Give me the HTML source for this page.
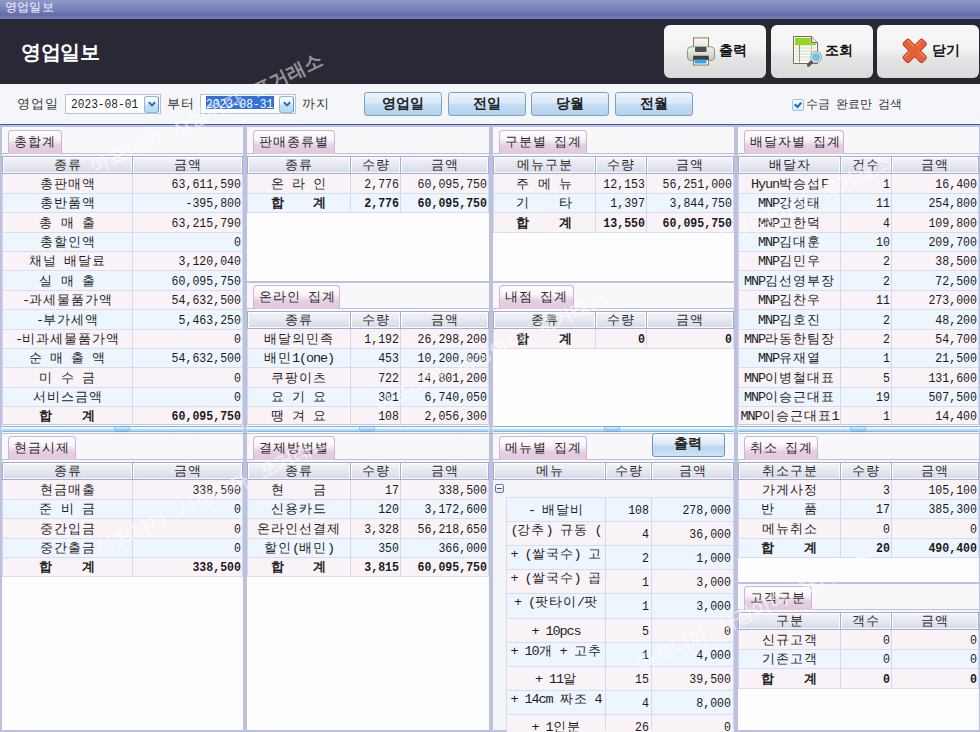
<!DOCTYPE html><html><head><meta charset="utf-8"><style>
*{margin:0;padding:0;box-sizing:border-box}
html,body{width:980px;height:732px;overflow:hidden;background:#f5f6f9;font-family:"Liberation Sans",sans-serif;color:#222}
div{white-space:pre}
.k{position:absolute;font-size:13px;letter-spacing:1px;text-align:center;overflow:hidden;color:#1e1e1e}
.n{position:absolute;font-family:"Liberation Mono",monospace;font-size:13px;text-align:right;transform:scaleX(0.89);transform-origin:100% 50%;padding-top:1px;color:#1a1a1a}
.b{font-weight:bold}
.tab{position:absolute;height:24px;border:1px solid #cfb3d0;border-bottom:none;border-radius:4px 4px 0 0;
 background:linear-gradient(#fffdff 0%,#faf5fa 35%,#f0e2ee 50%,#e6d0e4 62%,#e0c8dd 100%);font-size:13px;letter-spacing:1px;color:#2a2a2a;line-height:22px;padding-left:5px}
.hd{position:absolute;background:linear-gradient(#f4f5f9,#e3e5ee 60%,#d6d9e6);border-right:1px solid #a6add2;box-shadow:inset 1px 1px 0 #fff,inset -1px -1px 0 rgba(255,255,255,0.85);font-size:13px;letter-spacing:1px;color:#2a2a2a;text-align:center}
.btn{position:absolute;border:1px solid #7d9fc6;border-radius:3px;background:linear-gradient(#eef5fc,#d9e9f7 45%,#c2dbf1 55%,#b4d2ee);font-size:14px;font-weight:bold;text-align:center;color:#222}
</style></head><body>
<div style="position:absolute;left:0px;top:0px;width:980px;height:19px;background:linear-gradient(#9198c8 0px,#7b84bc 8px,#6770ab 14px,#646daa 16px,#6e79b5 17px,#6e79b5 19px)"></div>
<div style="position:absolute;left:5px;top:-1.6px;width:80px;height:18px;line-height:18px;color:#f4f4fb;font-size:11.5px;letter-spacing:0.2px">영업일보</div>
<div style="position:absolute;left:0px;top:19px;width:980px;height:65px;background:#2a2835"></div>
<div style="position:absolute;left:21px;top:37px;width:120px;height:30px;line-height:30px;color:#fff;font-size:20px;font-weight:bold;letter-spacing:-0.3px">영업일보</div>
<div style="position:absolute;left:664px;top:25px;width:102px;height:53px;border-radius:6px;background:linear-gradient(#f8f8f8 0%,#f3f3f3 45%,#e5e5e5 62%,#dadada 100%)"></div>
<div style="position:absolute;left:771px;top:25px;width:102px;height:53px;border-radius:6px;background:linear-gradient(#f8f8f8 0%,#f3f3f3 45%,#e5e5e5 62%,#dadada 100%)"></div>
<div style="position:absolute;left:877px;top:25px;width:102px;height:53px;border-radius:6px;background:linear-gradient(#f8f8f8 0%,#f3f3f3 45%,#e5e5e5 62%,#dadada 100%)"></div>
<div style="position:absolute;left:719px;top:38px;width:40px;height:26px;line-height:26px;font-size:13.5px;font-weight:bold;color:#111">출력</div>
<div style="position:absolute;left:825px;top:38px;width:40px;height:26px;line-height:26px;font-size:13.5px;font-weight:bold;color:#111">조회</div>
<div style="position:absolute;left:932px;top:38px;width:40px;height:26px;line-height:26px;font-size:13.5px;font-weight:bold;color:#111">닫기</div>
<svg style="position:absolute;left:686px;top:36px" width="30" height="32" viewBox="0 0 30 32">
<defs><linearGradient id="pb" x1="0" y1="0" x2="0" y2="1"><stop offset="0" stop-color="#f2f3ee"/><stop offset="1" stop-color="#c3c8bf"/></linearGradient>
<linearGradient id="pp" x1="0" y1="0" x2="0" y2="1"><stop offset="0" stop-color="#fafaf4"/><stop offset="1" stop-color="#e2e2d2"/></linearGradient></defs>
<rect x="7.5" y="1.9" width="15" height="11" fill="url(#pp)" stroke="#8b7b58"/>
<rect x="1.5" y="10.8" width="27" height="13.7" rx="3.5" fill="url(#pb)" stroke="#8f958f"/>
<rect x="9" y="11" width="11.5" height="5" rx="1" fill="#4d4d4d"/>
<rect x="7.5" y="20" width="15" height="9" fill="#fff" stroke="#8b7b58"/>
<rect x="7.5" y="20" width="15" height="4" fill="#3f3f3f"/>
<rect x="8.5" y="23.5" width="12" height="4" rx="1" fill="#35a2f2"/>
</svg>
<svg style="position:absolute;left:788px;top:32px" width="40" height="40" viewBox="0 0 40 40">
<path d="M5.5 4.5 H23.5 L29.5 10.5 V31.5 H5.5 Z" fill="#fbfbf5" stroke="#7b6b4b"/>
<path d="M7 6 H22.7 V11.3 H28 V13.2 H7 Z" fill="#8fd828"/>
<path d="M23.5 4.5 V10.5 H29.5" fill="#e9e9e0" stroke="#7b6b4b"/>
<g stroke="#d6d6ca" stroke-width="1"><path d="M7 16 H28 M7 19 H28 M7 22 H28 M7 25 H28 M7 28 H28"/></g>
<path d="M11.5 13 V30.5" stroke="#9a9a90" stroke-width="1"/>
<path d="M23.5 13 V30.5" stroke="#c0c0b4" stroke-width="1"/>
<path d="M24 29.5 L20.5 33" stroke="#555" stroke-width="3.2" stroke-linecap="round"/>
<circle cx="28.1" cy="25.1" r="5.4" fill="#eef1f1" stroke="#a4aaaa" stroke-width="1.2"/>
<circle cx="28.1" cy="25.1" r="3.4" fill="#62c8f6" stroke="#3aa0d8" stroke-width="0.6"/>
</svg>
<svg style="position:absolute;left:895px;top:32px" width="40" height="40" viewBox="0 0 40 40">
<defs><linearGradient id="xg" x1="0" y1="0" x2="1" y2="1"><stop offset="0" stop-color="#ee7a48"/><stop offset="1" stop-color="#e05a30"/></linearGradient></defs>
<g transform="translate(19.7 18.8) rotate(45)"><rect x="-13.6" y="-4" width="27.2" height="8" rx="2" fill="#e5613a" stroke="#c23a22" stroke-width="1"/></g>
<g transform="translate(19.7 18.8) rotate(-45)"><rect x="-13.6" y="-4" width="27.2" height="8" rx="2" fill="#e5613a" stroke="#c23a22" stroke-width="1"/></g>
<g transform="translate(19.7 18.8) rotate(45)"><rect x="-13.1" y="-3.5" width="26.2" height="7" rx="1.6" fill="#e5613a"/></g>
<g transform="translate(19.7 18.8) rotate(45)"><path d="M-12 -2.6 H-3.5 M3.5 -2.6 H12" stroke="#f39a66" stroke-width="1" opacity="0.8"/></g>
<g transform="translate(19.7 18.8) rotate(-45)"><path d="M-12 -2.6 H-4.2 M4.2 -2.6 H12" stroke="#f39a66" stroke-width="1" opacity="0.8"/></g>
</svg>
<div style="position:absolute;left:17px;top:93px;width:50px;height:22px;line-height:22px;font-size:13px;letter-spacing:1px;color:#333">영업일</div>
<div style="position:absolute;left:65px;top:94px;width:96px;height:20px;background:#fff;border:1px solid #b8bfd9"></div>
<div style="position:absolute;left:70.5px;top:94.8px;width:80px;height:20px;line-height:20px;font-family:Liberation Mono;font-size:13px;color:#1e1e1e;transform:scaleX(0.86);transform-origin:0 50%">2023-08-01</div>
<div style="position:absolute;left:144px;top:96px;width:15px;height:17px;border:1px solid #8fb6dc;border-right-color:#5a8fd0;border-radius:3px;background:linear-gradient(#fbfdff,#e6f3fc 45%,#c2e0f6 55%,#b5daf4)"></div>
<svg style="position:absolute;left:147px;top:100px" width="10" height="8"><path d="M1.8 2.2 L5 5.4 L8.2 2.2" stroke="#2f6cb4" stroke-width="2" fill="none"/></svg>
<div style="position:absolute;left:167px;top:93px;width:30px;height:22px;line-height:22px;font-size:13px;letter-spacing:1px;color:#333">부터</div>
<div style="position:absolute;left:200px;top:94px;width:96px;height:20px;background:#fff;border:1px solid #b8bfd9"></div>
<div style="position:absolute;left:206px;top:96px;width:68px;height:13px;background:#3570d8"></div>
<div style="position:absolute;left:205.5px;top:94.8px;width:80px;height:20px;line-height:20px;font-family:Liberation Mono;font-size:13px;color:#fff;transform:scaleX(0.86);transform-origin:0 50%">2023-08-31</div>
<div style="position:absolute;left:279px;top:96px;width:15px;height:17px;border:1px solid #8fb6dc;border-right-color:#5a8fd0;border-radius:3px;background:linear-gradient(#fbfdff,#e6f3fc 45%,#c2e0f6 55%,#b5daf4)"></div>
<svg style="position:absolute;left:282px;top:100px" width="10" height="8"><path d="M1.8 2.2 L5 5.4 L8.2 2.2" stroke="#2f6cb4" stroke-width="2" fill="none"/></svg>
<div style="position:absolute;left:302px;top:93px;width:30px;height:22px;line-height:22px;font-size:13px;letter-spacing:1px;color:#333">까지</div>
<div class="btn" style="left:364px;top:92px;width:78px;height:24px;line-height:20px">영업일</div>
<div class="btn" style="left:448px;top:92px;width:78px;height:24px;line-height:20px">전일</div>
<div class="btn" style="left:531px;top:92px;width:78px;height:24px;line-height:20px">당월</div>
<div class="btn" style="left:615px;top:92px;width:78px;height:24px;line-height:20px">전월</div>
<div style="position:absolute;left:792px;top:99px;width:12px;height:12px;border:1px solid #9cc2ea;border-radius:2px;background:linear-gradient(#f4faff,#dcefff)"></div>
<svg style="position:absolute;left:793px;top:100px" width="10" height="10"><path d="M1.6 4.2 L4.6 6.9 L8.2 2.6" stroke="#2d6cb8" stroke-width="2.2" fill="none"/></svg>
<div style="position:absolute;left:806px;top:92.5px;width:100px;height:22px;line-height:22px;font-size:12px;color:#333">수금<span style="font-family:Liberation Mono;font-size:11.57px;letter-spacing:-0.94px"> </span>완료만<span style="font-family:Liberation Mono;font-size:11.57px;letter-spacing:-0.94px"> </span>검색</div>
<div style="position:absolute;left:0px;top:124px;width:980px;height:1px;background:#4753b3"></div>
<div style="position:absolute;left:0px;top:125px;width:980px;height:607px;background:#bcc2de"></div>
<div style="position:absolute;left:2px;top:127px;width:241px;height:29px;background:#f8f8fa"></div>
<div style="position:absolute;left:2px;top:156px;width:241px;height:277px;background:#fdfdfe"></div>
<div style="position:absolute;left:2px;top:153px;width:241px;height:1px;background:#b9bfdc"></div>
<div class="tab" style="left:8px;top:130px;width:54px">총합계</div>
<div style="position:absolute;left:2px;top:156px;width:241px;height:18px;background:#a5acd2"></div>
<div class="hd" style="left:3px;top:157px;width:130px;height:16px;line-height:15px">종류</div>
<div class="hd" style="left:133px;top:157px;width:110px;height:16px;line-height:15px">금액</div>
<div style="position:absolute;left:2px;top:174px;width:241px;height:20px;background:#f9f3f7;border-bottom:1px solid #d9dcf0"></div>
<div class="k" style="left:3px;top:174px;width:129px;height:19px;line-height:19px">총판매액</div>
<div class="n" style="left:133px;top:174px;width:108px;height:19px;line-height:19px">63,611,590</div>
<div style="position:absolute;left:2px;top:194px;width:241px;height:19px;background:#edf5fd;border-bottom:1px solid #d9dcf0"></div>
<div class="k" style="left:3px;top:194px;width:129px;height:18px;line-height:18px">총반품액</div>
<div class="n" style="left:133px;top:194px;width:108px;height:18px;line-height:18px">-395,800</div>
<div style="position:absolute;left:2px;top:213px;width:241px;height:20px;background:#f9f3f7;border-bottom:1px solid #d9dcf0"></div>
<div class="k" style="left:3px;top:213px;width:129px;height:19px;line-height:19px">총<span style="font-family:Liberation Mono;font-size:13.5px;letter-spacing:-1.1px"> </span>매<span style="font-family:Liberation Mono;font-size:13.5px;letter-spacing:-1.1px"> </span>출</div>
<div class="n" style="left:133px;top:213px;width:108px;height:19px;line-height:19px">63,215,790</div>
<div style="position:absolute;left:2px;top:233px;width:241px;height:19px;background:#edf5fd;border-bottom:1px solid #d9dcf0"></div>
<div class="k" style="left:3px;top:233px;width:129px;height:18px;line-height:18px">총할인액</div>
<div class="n" style="left:133px;top:233px;width:108px;height:18px;line-height:18px">0</div>
<div style="position:absolute;left:2px;top:252px;width:241px;height:19px;background:#f9f3f7;border-bottom:1px solid #d9dcf0"></div>
<div class="k" style="left:3px;top:252px;width:129px;height:18px;line-height:18px">채널<span style="font-family:Liberation Mono;font-size:13.5px;letter-spacing:-1.1px"> </span>배달료</div>
<div class="n" style="left:133px;top:252px;width:108px;height:18px;line-height:18px">3,120,040</div>
<div style="position:absolute;left:2px;top:271px;width:241px;height:20px;background:#edf5fd;border-bottom:1px solid #d9dcf0"></div>
<div class="k" style="left:3px;top:271px;width:129px;height:19px;line-height:19px">실<span style="font-family:Liberation Mono;font-size:13.5px;letter-spacing:-1.1px"> </span>매<span style="font-family:Liberation Mono;font-size:13.5px;letter-spacing:-1.1px"> </span>출</div>
<div class="n" style="left:133px;top:271px;width:108px;height:19px;line-height:19px">60,095,750</div>
<div style="position:absolute;left:2px;top:291px;width:241px;height:19px;background:#f9f3f7;border-bottom:1px solid #d9dcf0"></div>
<div class="k" style="left:3px;top:291px;width:129px;height:18px;line-height:18px"><span style="font-family:Liberation Mono;font-size:13.5px;letter-spacing:-1.1px">-</span>과세물품가액</div>
<div class="n" style="left:133px;top:291px;width:108px;height:18px;line-height:18px">54,632,500</div>
<div style="position:absolute;left:2px;top:310px;width:241px;height:20px;background:#edf5fd;border-bottom:1px solid #d9dcf0"></div>
<div class="k" style="left:3px;top:310px;width:129px;height:19px;line-height:19px"><span style="font-family:Liberation Mono;font-size:13.5px;letter-spacing:-1.1px">-</span>부가세액</div>
<div class="n" style="left:133px;top:310px;width:108px;height:19px;line-height:19px">5,463,250</div>
<div style="position:absolute;left:2px;top:330px;width:241px;height:19px;background:#f9f3f7;border-bottom:1px solid #d9dcf0"></div>
<div class="k" style="left:3px;top:330px;width:129px;height:18px;line-height:18px"><span style="font-family:Liberation Mono;font-size:13.5px;letter-spacing:-1.1px">-</span>비과세물품가액</div>
<div class="n" style="left:133px;top:330px;width:108px;height:18px;line-height:18px">0</div>
<div style="position:absolute;left:2px;top:349px;width:241px;height:19px;background:#edf5fd;border-bottom:1px solid #d9dcf0"></div>
<div class="k" style="left:3px;top:349px;width:129px;height:18px;line-height:18px">순<span style="font-family:Liberation Mono;font-size:13.5px;letter-spacing:-1.1px"> </span>매<span style="font-family:Liberation Mono;font-size:13.5px;letter-spacing:-1.1px"> </span>출<span style="font-family:Liberation Mono;font-size:13.5px;letter-spacing:-1.1px"> </span>액</div>
<div class="n" style="left:133px;top:349px;width:108px;height:18px;line-height:18px">54,632,500</div>
<div style="position:absolute;left:2px;top:368px;width:241px;height:20px;background:#f9f3f7;border-bottom:1px solid #d9dcf0"></div>
<div class="k" style="left:3px;top:368px;width:129px;height:19px;line-height:19px">미<span style="font-family:Liberation Mono;font-size:13.5px;letter-spacing:-1.1px"> </span>수<span style="font-family:Liberation Mono;font-size:13.5px;letter-spacing:-1.1px"> </span>금</div>
<div class="n" style="left:133px;top:368px;width:108px;height:19px;line-height:19px">0</div>
<div style="position:absolute;left:2px;top:388px;width:241px;height:19px;background:#edf5fd;border-bottom:1px solid #d9dcf0"></div>
<div class="k" style="left:3px;top:388px;width:129px;height:18px;line-height:18px">서비스금액</div>
<div class="n" style="left:133px;top:388px;width:108px;height:18px;line-height:18px">0</div>
<div style="position:absolute;left:2px;top:407px;width:241px;height:18px;background:#f9f3f7;border-bottom:1px solid #c3c7de"></div>
<div class="k b" style="left:3px;top:407px;width:129px;height:18px;line-height:18px">합<span style="font-family:Liberation Mono;font-size:13.5px;letter-spacing:-1.1px">    </span>계</div>
<div class="n b" style="left:133px;top:407px;width:108px;height:18px;line-height:18px">60,095,750</div>
<div style="position:absolute;left:2px;top:174px;width:1px;height:251px;background:#d6d8f0"></div>
<div style="position:absolute;left:132px;top:174px;width:1px;height:251px;background:#d6d8f0"></div>
<div style="position:absolute;left:242px;top:174px;width:1px;height:251px;background:#d6d8f0"></div>
<div style="position:absolute;left:1px;top:426px;width:243px;height:6px;border-radius:3px;background:linear-gradient(#7db4e6 0px,#7db4e6 1px,#f0f8fe 1px,#eef7fe 3px,#b8dcf6 3px,#b2d8f5 5px,#7db4e6 5px)"></div>
<div style="position:absolute;left:114px;top:426px;width:16px;height:6px;border-left:1px solid #8cc0ee;border-right:1px solid #8cc0ee;background:linear-gradient(#6eaae6 0px,#6eaae6 1px,#d4eafc 1px,#c8e4fb 3px,#92c9f8 3px,#8cc6f8 5px,#6eaae6 5px)"></div>
<div style="position:absolute;left:2px;top:434px;width:241px;height:28px;background:#f8f8fa"></div>
<div style="position:absolute;left:2px;top:462px;width:241px;height:268px;background:#fdfdfe"></div>
<div style="position:absolute;left:2px;top:459px;width:241px;height:1px;background:#b9bfdc"></div>
<div class="tab" style="left:8px;top:436px;width:68px">현금시제</div>
<div style="position:absolute;left:2px;top:462px;width:241px;height:18px;background:#a5acd2"></div>
<div class="hd" style="left:3px;top:463px;width:130px;height:16px;line-height:15px">종류</div>
<div class="hd" style="left:133px;top:463px;width:110px;height:16px;line-height:15px">금액</div>
<div style="position:absolute;left:2px;top:480px;width:241px;height:20px;background:#f9f3f7;border-bottom:1px solid #d9dcf0"></div>
<div class="k" style="left:3px;top:480px;width:129px;height:19px;line-height:19px">현금매출</div>
<div class="n" style="left:133px;top:480px;width:108px;height:19px;line-height:19px">338,500</div>
<div style="position:absolute;left:2px;top:500px;width:241px;height:19px;background:#edf5fd;border-bottom:1px solid #d9dcf0"></div>
<div class="k" style="left:3px;top:500px;width:129px;height:18px;line-height:18px">준<span style="font-family:Liberation Mono;font-size:13.5px;letter-spacing:-1.1px"> </span>비<span style="font-family:Liberation Mono;font-size:13.5px;letter-spacing:-1.1px"> </span>금</div>
<div class="n" style="left:133px;top:500px;width:108px;height:18px;line-height:18px">0</div>
<div style="position:absolute;left:2px;top:519px;width:241px;height:20px;background:#f9f3f7;border-bottom:1px solid #d9dcf0"></div>
<div class="k" style="left:3px;top:519px;width:129px;height:19px;line-height:19px">중간입금</div>
<div class="n" style="left:133px;top:519px;width:108px;height:19px;line-height:19px">0</div>
<div style="position:absolute;left:2px;top:539px;width:241px;height:19px;background:#edf5fd;border-bottom:1px solid #d9dcf0"></div>
<div class="k" style="left:3px;top:539px;width:129px;height:18px;line-height:18px">중간출금</div>
<div class="n" style="left:133px;top:539px;width:108px;height:18px;line-height:18px">0</div>
<div style="position:absolute;left:2px;top:558px;width:241px;height:19px;background:#f9f3f7;border-bottom:1px solid #d9dcf0"></div>
<div class="k b" style="left:3px;top:558px;width:129px;height:18px;line-height:18px">합<span style="font-family:Liberation Mono;font-size:13.5px;letter-spacing:-1.1px">    </span>계</div>
<div class="n b" style="left:133px;top:558px;width:108px;height:18px;line-height:18px">338,500</div>
<div style="position:absolute;left:2px;top:480px;width:1px;height:97px;background:#d6d8f0"></div>
<div style="position:absolute;left:132px;top:480px;width:1px;height:97px;background:#d6d8f0"></div>
<div style="position:absolute;left:242px;top:480px;width:1px;height:97px;background:#d6d8f0"></div>
<div style="position:absolute;left:247px;top:127px;width:242px;height:29px;background:#f8f8fa"></div>
<div style="position:absolute;left:247px;top:156px;width:242px;height:125px;background:#fdfdfe"></div>
<div style="position:absolute;left:247px;top:153px;width:242px;height:1px;background:#b9bfdc"></div>
<div class="tab" style="left:253px;top:130px;width:82px">판매종류별</div>
<div style="position:absolute;left:247px;top:156px;width:242px;height:18px;background:#a5acd2"></div>
<div class="hd" style="left:248px;top:157px;width:103px;height:16px;line-height:15px">종류</div>
<div class="hd" style="left:351px;top:157px;width:50px;height:16px;line-height:15px">수량</div>
<div class="hd" style="left:401px;top:157px;width:88px;height:16px;line-height:15px">금액</div>
<div style="position:absolute;left:247px;top:174px;width:242px;height:20px;background:#f9f3f7;border-bottom:1px solid #d9dcf0"></div>
<div class="k" style="left:248px;top:174px;width:102px;height:19px;line-height:19px">온<span style="font-family:Liberation Mono;font-size:13.5px;letter-spacing:-1.1px"> </span>라<span style="font-family:Liberation Mono;font-size:13.5px;letter-spacing:-1.1px"> </span>인</div>
<div class="n" style="left:351px;top:174px;width:48px;height:19px;line-height:19px">2,776</div>
<div class="n" style="left:401px;top:174px;width:86px;height:19px;line-height:19px">60,095,750</div>
<div style="position:absolute;left:247px;top:194px;width:242px;height:19px;background:#edf5fd;border-bottom:1px solid #d9dcf0"></div>
<div class="k b" style="left:248px;top:194px;width:102px;height:18px;line-height:18px">합<span style="font-family:Liberation Mono;font-size:13.5px;letter-spacing:-1.1px">    </span>계</div>
<div class="n b" style="left:351px;top:194px;width:48px;height:18px;line-height:18px">2,776</div>
<div class="n b" style="left:401px;top:194px;width:86px;height:18px;line-height:18px">60,095,750</div>
<div style="position:absolute;left:247px;top:174px;width:1px;height:39px;background:#d6d8f0"></div>
<div style="position:absolute;left:350px;top:174px;width:1px;height:39px;background:#d6d8f0"></div>
<div style="position:absolute;left:400px;top:174px;width:1px;height:39px;background:#d6d8f0"></div>
<div style="position:absolute;left:488px;top:174px;width:1px;height:39px;background:#d6d8f0"></div>
<div style="position:absolute;left:247px;top:283px;width:242px;height:28px;background:#f8f8fa"></div>
<div style="position:absolute;left:247px;top:311px;width:242px;height:122px;background:#fdfdfe"></div>
<div style="position:absolute;left:247px;top:308px;width:242px;height:1px;background:#b9bfdc"></div>
<div class="tab" style="left:253px;top:285px;width:87px">온라인<span style="font-family:Liberation Mono;font-size:13.5px;letter-spacing:-1.1px"> </span>집계</div>
<div style="position:absolute;left:247px;top:311px;width:242px;height:18px;background:#a5acd2"></div>
<div class="hd" style="left:248px;top:312px;width:103px;height:16px;line-height:15px">종류</div>
<div class="hd" style="left:351px;top:312px;width:50px;height:16px;line-height:15px">수량</div>
<div class="hd" style="left:401px;top:312px;width:88px;height:16px;line-height:15px">금액</div>
<div style="position:absolute;left:247px;top:329px;width:242px;height:20px;background:#f9f3f7;border-bottom:1px solid #d9dcf0"></div>
<div class="k" style="left:248px;top:329px;width:102px;height:19px;line-height:19px">배달의민족</div>
<div class="n" style="left:351px;top:329px;width:48px;height:19px;line-height:19px">1,192</div>
<div class="n" style="left:401px;top:329px;width:86px;height:19px;line-height:19px">26,298,200</div>
<div style="position:absolute;left:247px;top:349px;width:242px;height:19px;background:#edf5fd;border-bottom:1px solid #d9dcf0"></div>
<div class="k" style="left:248px;top:349px;width:102px;height:18px;line-height:18px">배민<span style="font-family:Liberation Mono;font-size:13.5px;letter-spacing:-1.1px">1(one)</span></div>
<div class="n" style="left:351px;top:349px;width:48px;height:18px;line-height:18px">453</div>
<div class="n" style="left:401px;top:349px;width:86px;height:18px;line-height:18px">10,200,000</div>
<div style="position:absolute;left:247px;top:368px;width:242px;height:20px;background:#f9f3f7;border-bottom:1px solid #d9dcf0"></div>
<div class="k" style="left:248px;top:368px;width:102px;height:19px;line-height:19px">쿠팡이츠</div>
<div class="n" style="left:351px;top:368px;width:48px;height:19px;line-height:19px">722</div>
<div class="n" style="left:401px;top:368px;width:86px;height:19px;line-height:19px">14,801,200</div>
<div style="position:absolute;left:247px;top:388px;width:242px;height:19px;background:#edf5fd;border-bottom:1px solid #d9dcf0"></div>
<div class="k" style="left:248px;top:388px;width:102px;height:18px;line-height:18px">요<span style="font-family:Liberation Mono;font-size:13.5px;letter-spacing:-1.1px"> </span>기<span style="font-family:Liberation Mono;font-size:13.5px;letter-spacing:-1.1px"> </span>요</div>
<div class="n" style="left:351px;top:388px;width:48px;height:18px;line-height:18px">301</div>
<div class="n" style="left:401px;top:388px;width:86px;height:18px;line-height:18px">6,740,050</div>
<div style="position:absolute;left:247px;top:407px;width:242px;height:18px;background:#f9f3f7;border-bottom:1px solid #c3c7de"></div>
<div class="k" style="left:248px;top:407px;width:102px;height:18px;line-height:18px">땡<span style="font-family:Liberation Mono;font-size:13.5px;letter-spacing:-1.1px"> </span>겨<span style="font-family:Liberation Mono;font-size:13.5px;letter-spacing:-1.1px"> </span>요</div>
<div class="n" style="left:351px;top:407px;width:48px;height:18px;line-height:18px">108</div>
<div class="n" style="left:401px;top:407px;width:86px;height:18px;line-height:18px">2,056,300</div>
<div style="position:absolute;left:247px;top:329px;width:1px;height:96px;background:#d6d8f0"></div>
<div style="position:absolute;left:350px;top:329px;width:1px;height:96px;background:#d6d8f0"></div>
<div style="position:absolute;left:400px;top:329px;width:1px;height:96px;background:#d6d8f0"></div>
<div style="position:absolute;left:488px;top:329px;width:1px;height:96px;background:#d6d8f0"></div>
<div style="position:absolute;left:246px;top:426px;width:244px;height:6px;border-radius:3px;background:linear-gradient(#7db4e6 0px,#7db4e6 1px,#f0f8fe 1px,#eef7fe 3px,#b8dcf6 3px,#b2d8f5 5px,#7db4e6 5px)"></div>
<div style="position:absolute;left:359px;top:426px;width:16px;height:6px;border-left:1px solid #8cc0ee;border-right:1px solid #8cc0ee;background:linear-gradient(#6eaae6 0px,#6eaae6 1px,#d4eafc 1px,#c8e4fb 3px,#92c9f8 3px,#8cc6f8 5px,#6eaae6 5px)"></div>
<div style="position:absolute;left:247px;top:434px;width:242px;height:28px;background:#f8f8fa"></div>
<div style="position:absolute;left:247px;top:462px;width:242px;height:268px;background:#fdfdfe"></div>
<div style="position:absolute;left:247px;top:459px;width:242px;height:1px;background:#b9bfdc"></div>
<div class="tab" style="left:253px;top:436px;width:82px">결제방법별</div>
<div style="position:absolute;left:247px;top:462px;width:242px;height:18px;background:#a5acd2"></div>
<div class="hd" style="left:248px;top:463px;width:103px;height:16px;line-height:15px">종류</div>
<div class="hd" style="left:351px;top:463px;width:50px;height:16px;line-height:15px">수량</div>
<div class="hd" style="left:401px;top:463px;width:88px;height:16px;line-height:15px">금액</div>
<div style="position:absolute;left:247px;top:480px;width:242px;height:20px;background:#f9f3f7;border-bottom:1px solid #d9dcf0"></div>
<div class="k" style="left:248px;top:480px;width:102px;height:19px;line-height:19px">현<span style="font-family:Liberation Mono;font-size:13.5px;letter-spacing:-1.1px">    </span>금</div>
<div class="n" style="left:351px;top:480px;width:48px;height:19px;line-height:19px">17</div>
<div class="n" style="left:401px;top:480px;width:86px;height:19px;line-height:19px">338,500</div>
<div style="position:absolute;left:247px;top:500px;width:242px;height:19px;background:#edf5fd;border-bottom:1px solid #d9dcf0"></div>
<div class="k" style="left:248px;top:500px;width:102px;height:18px;line-height:18px">신용카드</div>
<div class="n" style="left:351px;top:500px;width:48px;height:18px;line-height:18px">120</div>
<div class="n" style="left:401px;top:500px;width:86px;height:18px;line-height:18px">3,172,600</div>
<div style="position:absolute;left:247px;top:519px;width:242px;height:20px;background:#f9f3f7;border-bottom:1px solid #d9dcf0"></div>
<div class="k" style="left:248px;top:519px;width:102px;height:19px;line-height:19px">온라인선결제</div>
<div class="n" style="left:351px;top:519px;width:48px;height:19px;line-height:19px">3,328</div>
<div class="n" style="left:401px;top:519px;width:86px;height:19px;line-height:19px">56,218,650</div>
<div style="position:absolute;left:247px;top:539px;width:242px;height:19px;background:#edf5fd;border-bottom:1px solid #d9dcf0"></div>
<div class="k" style="left:248px;top:539px;width:102px;height:18px;line-height:18px">할인<span style="font-family:Liberation Mono;font-size:13.5px;letter-spacing:-1.1px">(</span>배민<span style="font-family:Liberation Mono;font-size:13.5px;letter-spacing:-1.1px">)</span></div>
<div class="n" style="left:351px;top:539px;width:48px;height:18px;line-height:18px">350</div>
<div class="n" style="left:401px;top:539px;width:86px;height:18px;line-height:18px">366,000</div>
<div style="position:absolute;left:247px;top:558px;width:242px;height:19px;background:#f9f3f7;border-bottom:1px solid #d9dcf0"></div>
<div class="k b" style="left:248px;top:558px;width:102px;height:18px;line-height:18px">합<span style="font-family:Liberation Mono;font-size:13.5px;letter-spacing:-1.1px">    </span>계</div>
<div class="n b" style="left:351px;top:558px;width:48px;height:18px;line-height:18px">3,815</div>
<div class="n b" style="left:401px;top:558px;width:86px;height:18px;line-height:18px">60,095,750</div>
<div style="position:absolute;left:247px;top:480px;width:1px;height:97px;background:#d6d8f0"></div>
<div style="position:absolute;left:350px;top:480px;width:1px;height:97px;background:#d6d8f0"></div>
<div style="position:absolute;left:400px;top:480px;width:1px;height:97px;background:#d6d8f0"></div>
<div style="position:absolute;left:488px;top:480px;width:1px;height:97px;background:#d6d8f0"></div>
<div style="position:absolute;left:493px;top:127px;width:241px;height:29px;background:#f8f8fa"></div>
<div style="position:absolute;left:493px;top:156px;width:241px;height:125px;background:#fdfdfe"></div>
<div style="position:absolute;left:493px;top:153px;width:241px;height:1px;background:#b9bfdc"></div>
<div class="tab" style="left:499px;top:130px;width:88px">구분별<span style="font-family:Liberation Mono;font-size:13.5px;letter-spacing:-1.1px"> </span>집계</div>
<div style="position:absolute;left:493px;top:156px;width:241px;height:18px;background:#a5acd2"></div>
<div class="hd" style="left:494px;top:157px;width:102px;height:16px;line-height:15px">메뉴구분</div>
<div class="hd" style="left:596px;top:157px;width:51px;height:16px;line-height:15px">수량</div>
<div class="hd" style="left:647px;top:157px;width:87px;height:16px;line-height:15px">금액</div>
<div style="position:absolute;left:493px;top:174px;width:241px;height:20px;background:#f9f3f7;border-bottom:1px solid #d9dcf0"></div>
<div class="k" style="left:494px;top:174px;width:101px;height:19px;line-height:19px">주<span style="font-family:Liberation Mono;font-size:13.5px;letter-spacing:-1.1px"> </span>메<span style="font-family:Liberation Mono;font-size:13.5px;letter-spacing:-1.1px"> </span>뉴</div>
<div class="n" style="left:596px;top:174px;width:49px;height:19px;line-height:19px">12,153</div>
<div class="n" style="left:647px;top:174px;width:85px;height:19px;line-height:19px">56,251,000</div>
<div style="position:absolute;left:493px;top:194px;width:241px;height:19px;background:#edf5fd;border-bottom:1px solid #d9dcf0"></div>
<div class="k" style="left:494px;top:194px;width:101px;height:18px;line-height:18px">기<span style="font-family:Liberation Mono;font-size:13.5px;letter-spacing:-1.1px">    </span>타</div>
<div class="n" style="left:596px;top:194px;width:49px;height:18px;line-height:18px">1,397</div>
<div class="n" style="left:647px;top:194px;width:85px;height:18px;line-height:18px">3,844,750</div>
<div style="position:absolute;left:493px;top:213px;width:241px;height:20px;background:#f9f3f7;border-bottom:1px solid #d9dcf0"></div>
<div class="k b" style="left:494px;top:213px;width:101px;height:19px;line-height:19px">합<span style="font-family:Liberation Mono;font-size:13.5px;letter-spacing:-1.1px">    </span>계</div>
<div class="n b" style="left:596px;top:213px;width:49px;height:19px;line-height:19px">13,550</div>
<div class="n b" style="left:647px;top:213px;width:85px;height:19px;line-height:19px">60,095,750</div>
<div style="position:absolute;left:493px;top:174px;width:1px;height:59px;background:#d6d8f0"></div>
<div style="position:absolute;left:595px;top:174px;width:1px;height:59px;background:#d6d8f0"></div>
<div style="position:absolute;left:646px;top:174px;width:1px;height:59px;background:#d6d8f0"></div>
<div style="position:absolute;left:733px;top:174px;width:1px;height:59px;background:#d6d8f0"></div>
<div style="position:absolute;left:493px;top:283px;width:241px;height:28px;background:#f8f8fa"></div>
<div style="position:absolute;left:493px;top:311px;width:241px;height:122px;background:#fdfdfe"></div>
<div style="position:absolute;left:493px;top:308px;width:241px;height:1px;background:#b9bfdc"></div>
<div class="tab" style="left:499px;top:285px;width:75px">내점<span style="font-family:Liberation Mono;font-size:13.5px;letter-spacing:-1.1px"> </span>집계</div>
<div style="position:absolute;left:493px;top:311px;width:241px;height:18px;background:#a5acd2"></div>
<div class="hd" style="left:494px;top:312px;width:102px;height:16px;line-height:15px">종류</div>
<div class="hd" style="left:596px;top:312px;width:51px;height:16px;line-height:15px">수량</div>
<div class="hd" style="left:647px;top:312px;width:87px;height:16px;line-height:15px">금액</div>
<div style="position:absolute;left:493px;top:329px;width:241px;height:20px;background:#f9f3f7;border-bottom:1px solid #d9dcf0"></div>
<div class="k b" style="left:494px;top:329px;width:101px;height:19px;line-height:19px">합<span style="font-family:Liberation Mono;font-size:13.5px;letter-spacing:-1.1px">    </span>계</div>
<div class="n b" style="left:596px;top:329px;width:49px;height:19px;line-height:19px">0</div>
<div class="n b" style="left:647px;top:329px;width:85px;height:19px;line-height:19px">0</div>
<div style="position:absolute;left:493px;top:329px;width:1px;height:20px;background:#d6d8f0"></div>
<div style="position:absolute;left:595px;top:329px;width:1px;height:20px;background:#d6d8f0"></div>
<div style="position:absolute;left:646px;top:329px;width:1px;height:20px;background:#d6d8f0"></div>
<div style="position:absolute;left:733px;top:329px;width:1px;height:20px;background:#d6d8f0"></div>
<div style="position:absolute;left:492px;top:426px;width:243px;height:6px;border-radius:3px;background:linear-gradient(#7db4e6 0px,#7db4e6 1px,#f0f8fe 1px,#eef7fe 3px,#b8dcf6 3px,#b2d8f5 5px,#7db4e6 5px)"></div>
<div style="position:absolute;left:604px;top:426px;width:16px;height:6px;border-left:1px solid #8cc0ee;border-right:1px solid #8cc0ee;background:linear-gradient(#6eaae6 0px,#6eaae6 1px,#d4eafc 1px,#c8e4fb 3px,#92c9f8 3px,#8cc6f8 5px,#6eaae6 5px)"></div>
<div style="position:absolute;left:493px;top:434px;width:241px;height:28px;background:#f8f8fa"></div>
<div style="position:absolute;left:493px;top:462px;width:241px;height:268px;background:#fdfdfe"></div>
<div style="position:absolute;left:493px;top:459px;width:241px;height:1px;background:#b9bfdc"></div>
<div class="tab" style="left:499px;top:436px;width:88px">메뉴별<span style="font-family:Liberation Mono;font-size:13.5px;letter-spacing:-1.1px"> </span>집계</div>
<div style="position:absolute;left:493px;top:462px;width:241px;height:18px;background:#a5acd2"></div>
<div class="hd" style="left:494px;top:463px;width:112px;height:16px;line-height:15px">메뉴</div>
<div class="hd" style="left:606px;top:463px;width:46px;height:16px;line-height:15px">수량</div>
<div class="hd" style="left:652px;top:463px;width:82px;height:16px;line-height:15px">금액</div>
<div style="position:absolute;left:493px;top:480px;width:241px;height:250px;background:#f3f4f8"></div>
<div style="position:absolute;left:495px;top:484px;width:9px;height:9px;border:1px solid #6c74aa;border-radius:2px;background:linear-gradient(#fff,#dfe2ee)"></div>
<div style="position:absolute;left:497px;top:488px;width:5px;height:1px;background:#4a5290"></div>
<div style="position:absolute;left:506px;top:497px;width:228px;height:24px;background:#edf5fd;border-top:1px solid #d9dcf0;border-left:1px solid #d9dcf0"></div>
<div class="k" style="left:507px;top:498px;width:98px;height:23px;line-height:23px"><span style="font-family:Liberation Mono;font-size:13.5px;letter-spacing:-1.1px">- </span>배달비</div>
<div class="n" style="left:606px;top:498px;width:43px;height:23px;line-height:23px">108</div>
<div class="n" style="left:652px;top:498px;width:79px;height:23px;line-height:23px">278,000</div>
<div style="position:absolute;left:506px;top:521px;width:228px;height:24px;background:#f9f3f7;border-top:1px solid #d9dcf0;border-left:1px solid #d9dcf0"></div>
<div class="k" style="left:506px;top:521px;width:100px;height:18px;line-height:18px;overflow:visible"><span style="font-family:Liberation Mono;font-size:13.5px;letter-spacing:-1.1px">(</span>강추<span style="font-family:Liberation Mono;font-size:13.5px;letter-spacing:-1.1px">) </span>규동<span style="font-family:Liberation Mono;font-size:13.5px;letter-spacing:-1.1px"> (</span></div>
<div class="n" style="left:606px;top:522px;width:43px;height:23px;line-height:23px">4</div>
<div class="n" style="left:652px;top:522px;width:79px;height:23px;line-height:23px">36,000</div>
<div style="position:absolute;left:506px;top:545px;width:228px;height:24px;background:#edf5fd;border-top:1px solid #d9dcf0;border-left:1px solid #d9dcf0"></div>
<div class="k" style="left:506px;top:545px;width:100px;height:18px;line-height:18px;overflow:visible"><span style="font-family:Liberation Mono;font-size:13.5px;letter-spacing:-1.1px">+ (</span>쌀국수<span style="font-family:Liberation Mono;font-size:13.5px;letter-spacing:-1.1px">) </span>고</div>
<div class="n" style="left:606px;top:546px;width:43px;height:23px;line-height:23px">2</div>
<div class="n" style="left:652px;top:546px;width:79px;height:23px;line-height:23px">1,000</div>
<div style="position:absolute;left:506px;top:569px;width:228px;height:24px;background:#f9f3f7;border-top:1px solid #d9dcf0;border-left:1px solid #d9dcf0"></div>
<div class="k" style="left:506px;top:569px;width:100px;height:18px;line-height:18px;overflow:visible"><span style="font-family:Liberation Mono;font-size:13.5px;letter-spacing:-1.1px">+ (</span>쌀국수<span style="font-family:Liberation Mono;font-size:13.5px;letter-spacing:-1.1px">) </span>곱</div>
<div class="n" style="left:606px;top:570px;width:43px;height:23px;line-height:23px">1</div>
<div class="n" style="left:652px;top:570px;width:79px;height:23px;line-height:23px">3,000</div>
<div style="position:absolute;left:506px;top:593px;width:228px;height:25px;background:#edf5fd;border-top:1px solid #d9dcf0;border-left:1px solid #d9dcf0"></div>
<div class="k" style="left:506px;top:593px;width:100px;height:18px;line-height:18px;overflow:visible"><span style="font-family:Liberation Mono;font-size:13.5px;letter-spacing:-1.1px">+ (</span>팟타이<span style="font-family:Liberation Mono;font-size:13.5px;letter-spacing:-1.1px">/</span>팟</div>
<div class="n" style="left:606px;top:594px;width:43px;height:24px;line-height:24px">1</div>
<div class="n" style="left:652px;top:594px;width:79px;height:24px;line-height:24px">3,000</div>
<div style="position:absolute;left:506px;top:618px;width:228px;height:24px;background:#f9f3f7;border-top:1px solid #d9dcf0;border-left:1px solid #d9dcf0"></div>
<div class="k" style="left:507px;top:619px;width:98px;height:23px;line-height:23px"><span style="font-family:Liberation Mono;font-size:13.5px;letter-spacing:-1.1px">+ 10pcs</span></div>
<div class="n" style="left:606px;top:619px;width:43px;height:23px;line-height:23px">5</div>
<div class="n" style="left:652px;top:619px;width:79px;height:23px;line-height:23px">0</div>
<div style="position:absolute;left:506px;top:642px;width:228px;height:24px;background:#edf5fd;border-top:1px solid #d9dcf0;border-left:1px solid #d9dcf0"></div>
<div class="k" style="left:506px;top:642px;width:100px;height:18px;line-height:18px;overflow:visible"><span style="font-family:Liberation Mono;font-size:13.5px;letter-spacing:-1.1px">+ 10</span>개<span style="font-family:Liberation Mono;font-size:13.5px;letter-spacing:-1.1px"> + </span>고추</div>
<div class="n" style="left:606px;top:643px;width:43px;height:23px;line-height:23px">1</div>
<div class="n" style="left:652px;top:643px;width:79px;height:23px;line-height:23px">4,000</div>
<div style="position:absolute;left:506px;top:666px;width:228px;height:24px;background:#f9f3f7;border-top:1px solid #d9dcf0;border-left:1px solid #d9dcf0"></div>
<div class="k" style="left:507px;top:667px;width:98px;height:23px;line-height:23px"><span style="font-family:Liberation Mono;font-size:13.5px;letter-spacing:-1.1px">+ 11</span>알</div>
<div class="n" style="left:606px;top:667px;width:43px;height:23px;line-height:23px">15</div>
<div class="n" style="left:652px;top:667px;width:79px;height:23px;line-height:23px">39,500</div>
<div style="position:absolute;left:506px;top:690px;width:228px;height:24px;background:#edf5fd;border-top:1px solid #d9dcf0;border-left:1px solid #d9dcf0"></div>
<div class="k" style="left:506px;top:690px;width:100px;height:18px;line-height:18px;overflow:visible"><span style="font-family:Liberation Mono;font-size:13.5px;letter-spacing:-1.1px">+ 14cm </span>짜조<span style="font-family:Liberation Mono;font-size:13.5px;letter-spacing:-1.1px"> 4</span></div>
<div class="n" style="left:606px;top:691px;width:43px;height:23px;line-height:23px">4</div>
<div class="n" style="left:652px;top:691px;width:79px;height:23px;line-height:23px">8,000</div>
<div style="position:absolute;left:506px;top:714px;width:228px;height:24px;background:#f9f3f7;border-top:1px solid #d9dcf0;border-left:1px solid #d9dcf0"></div>
<div class="k" style="left:507px;top:715px;width:98px;height:23px;line-height:23px"><span style="font-family:Liberation Mono;font-size:13.5px;letter-spacing:-1.1px">+ 1</span>인분</div>
<div class="n" style="left:606px;top:715px;width:43px;height:23px;line-height:23px">26</div>
<div class="n" style="left:652px;top:715px;width:79px;height:23px;line-height:23px">0</div>
<div style="position:absolute;left:605px;top:497px;width:1px;height:233px;background:#d6d8f0"></div>
<div style="position:absolute;left:651px;top:497px;width:1px;height:233px;background:#d6d8f0"></div>
<div style="position:absolute;left:733px;top:480px;width:1px;height:250px;background:#d6d8f0"></div>
<div class="btn" style="left:652px;top:433px;width:73px;height:24px;line-height:18px;text-indent:-2px;border-color:#6c95c4;background:linear-gradient(#f5f9fd,#dceaf6 45%,#b9d6ee 60%,#cfe3f4)">출력</div>
<div style="position:absolute;left:738px;top:127px;width:241px;height:29px;background:#f8f8fa"></div>
<div style="position:absolute;left:738px;top:156px;width:241px;height:277px;background:#fdfdfe"></div>
<div style="position:absolute;left:738px;top:153px;width:241px;height:1px;background:#b9bfdc"></div>
<div class="tab" style="left:744px;top:130px;width:100px">배달자별<span style="font-family:Liberation Mono;font-size:13.5px;letter-spacing:-1.1px"> </span>집계</div>
<div style="position:absolute;left:738px;top:156px;width:241px;height:18px;background:#a5acd2"></div>
<div class="hd" style="left:739px;top:157px;width:102px;height:16px;line-height:15px">배달자</div>
<div class="hd" style="left:841px;top:157px;width:51px;height:16px;line-height:15px">건수</div>
<div class="hd" style="left:892px;top:157px;width:87px;height:16px;line-height:15px">금액</div>
<div style="position:absolute;left:738px;top:174px;width:241px;height:20px;background:#f9f3f7;border-bottom:1px solid #d9dcf0"></div>
<div class="k" style="left:739px;top:174px;width:101px;height:19px;line-height:19px"><span style="font-family:Liberation Mono;font-size:13.5px;letter-spacing:-1.1px">Hyun</span>박승섭<span style="font-family:Liberation Mono;font-size:13.5px;letter-spacing:-1.1px">F</span></div>
<div class="n" style="left:841px;top:174px;width:49px;height:19px;line-height:19px">1</div>
<div class="n" style="left:892px;top:174px;width:85px;height:19px;line-height:19px">16,400</div>
<div style="position:absolute;left:738px;top:194px;width:241px;height:19px;background:#edf5fd;border-bottom:1px solid #d9dcf0"></div>
<div class="k" style="left:739px;top:194px;width:101px;height:18px;line-height:18px"><span style="font-family:Liberation Mono;font-size:13.5px;letter-spacing:-1.1px">MNP</span>강성태</div>
<div class="n" style="left:841px;top:194px;width:49px;height:18px;line-height:18px">11</div>
<div class="n" style="left:892px;top:194px;width:85px;height:18px;line-height:18px">254,800</div>
<div style="position:absolute;left:738px;top:213px;width:241px;height:20px;background:#f9f3f7;border-bottom:1px solid #d9dcf0"></div>
<div class="k" style="left:739px;top:213px;width:101px;height:19px;line-height:19px"><span style="font-family:Liberation Mono;font-size:13.5px;letter-spacing:-1.1px">MNP</span>고한덕</div>
<div class="n" style="left:841px;top:213px;width:49px;height:19px;line-height:19px">4</div>
<div class="n" style="left:892px;top:213px;width:85px;height:19px;line-height:19px">109,800</div>
<div style="position:absolute;left:738px;top:233px;width:241px;height:19px;background:#edf5fd;border-bottom:1px solid #d9dcf0"></div>
<div class="k" style="left:739px;top:233px;width:101px;height:18px;line-height:18px"><span style="font-family:Liberation Mono;font-size:13.5px;letter-spacing:-1.1px">MNP</span>김대훈</div>
<div class="n" style="left:841px;top:233px;width:49px;height:18px;line-height:18px">10</div>
<div class="n" style="left:892px;top:233px;width:85px;height:18px;line-height:18px">209,700</div>
<div style="position:absolute;left:738px;top:252px;width:241px;height:19px;background:#f9f3f7;border-bottom:1px solid #d9dcf0"></div>
<div class="k" style="left:739px;top:252px;width:101px;height:18px;line-height:18px"><span style="font-family:Liberation Mono;font-size:13.5px;letter-spacing:-1.1px">MNP</span>김민우</div>
<div class="n" style="left:841px;top:252px;width:49px;height:18px;line-height:18px">2</div>
<div class="n" style="left:892px;top:252px;width:85px;height:18px;line-height:18px">38,500</div>
<div style="position:absolute;left:738px;top:271px;width:241px;height:20px;background:#edf5fd;border-bottom:1px solid #d9dcf0"></div>
<div class="k" style="left:739px;top:271px;width:101px;height:19px;line-height:19px"><span style="font-family:Liberation Mono;font-size:13.5px;letter-spacing:-1.1px">MNP</span>김선영부장</div>
<div class="n" style="left:841px;top:271px;width:49px;height:19px;line-height:19px">2</div>
<div class="n" style="left:892px;top:271px;width:85px;height:19px;line-height:19px">72,500</div>
<div style="position:absolute;left:738px;top:291px;width:241px;height:19px;background:#f9f3f7;border-bottom:1px solid #d9dcf0"></div>
<div class="k" style="left:739px;top:291px;width:101px;height:18px;line-height:18px"><span style="font-family:Liberation Mono;font-size:13.5px;letter-spacing:-1.1px">MNP</span>김찬우</div>
<div class="n" style="left:841px;top:291px;width:49px;height:18px;line-height:18px">11</div>
<div class="n" style="left:892px;top:291px;width:85px;height:18px;line-height:18px">273,000</div>
<div style="position:absolute;left:738px;top:310px;width:241px;height:20px;background:#edf5fd;border-bottom:1px solid #d9dcf0"></div>
<div class="k" style="left:739px;top:310px;width:101px;height:19px;line-height:19px"><span style="font-family:Liberation Mono;font-size:13.5px;letter-spacing:-1.1px">MNP</span>김호진</div>
<div class="n" style="left:841px;top:310px;width:49px;height:19px;line-height:19px">2</div>
<div class="n" style="left:892px;top:310px;width:85px;height:19px;line-height:19px">48,200</div>
<div style="position:absolute;left:738px;top:330px;width:241px;height:19px;background:#f9f3f7;border-bottom:1px solid #d9dcf0"></div>
<div class="k" style="left:739px;top:330px;width:101px;height:18px;line-height:18px"><span style="font-family:Liberation Mono;font-size:13.5px;letter-spacing:-1.1px">MNP</span>라동한팀장</div>
<div class="n" style="left:841px;top:330px;width:49px;height:18px;line-height:18px">2</div>
<div class="n" style="left:892px;top:330px;width:85px;height:18px;line-height:18px">54,700</div>
<div style="position:absolute;left:738px;top:349px;width:241px;height:19px;background:#edf5fd;border-bottom:1px solid #d9dcf0"></div>
<div class="k" style="left:739px;top:349px;width:101px;height:18px;line-height:18px"><span style="font-family:Liberation Mono;font-size:13.5px;letter-spacing:-1.1px">MNP</span>유재열</div>
<div class="n" style="left:841px;top:349px;width:49px;height:18px;line-height:18px">1</div>
<div class="n" style="left:892px;top:349px;width:85px;height:18px;line-height:18px">21,500</div>
<div style="position:absolute;left:738px;top:368px;width:241px;height:20px;background:#f9f3f7;border-bottom:1px solid #d9dcf0"></div>
<div class="k" style="left:739px;top:368px;width:101px;height:19px;line-height:19px"><span style="font-family:Liberation Mono;font-size:13.5px;letter-spacing:-1.1px">MNP</span>이병철대표</div>
<div class="n" style="left:841px;top:368px;width:49px;height:19px;line-height:19px">5</div>
<div class="n" style="left:892px;top:368px;width:85px;height:19px;line-height:19px">131,600</div>
<div style="position:absolute;left:738px;top:388px;width:241px;height:19px;background:#edf5fd;border-bottom:1px solid #d9dcf0"></div>
<div class="k" style="left:739px;top:388px;width:101px;height:18px;line-height:18px"><span style="font-family:Liberation Mono;font-size:13.5px;letter-spacing:-1.1px">MNP</span>이승근대표</div>
<div class="n" style="left:841px;top:388px;width:49px;height:18px;line-height:18px">19</div>
<div class="n" style="left:892px;top:388px;width:85px;height:18px;line-height:18px">507,500</div>
<div style="position:absolute;left:738px;top:407px;width:241px;height:18px;background:#f9f3f7;border-bottom:1px solid #c3c7de"></div>
<div class="k" style="left:739px;top:407px;width:101px;height:18px;line-height:18px"><span style="font-family:Liberation Mono;font-size:13.5px;letter-spacing:-1.1px">MNP</span>이승근대표<span style="font-family:Liberation Mono;font-size:13.5px;letter-spacing:-1.1px">1</span></div>
<div class="n" style="left:841px;top:407px;width:49px;height:18px;line-height:18px">1</div>
<div class="n" style="left:892px;top:407px;width:85px;height:18px;line-height:18px">14,400</div>
<div style="position:absolute;left:738px;top:174px;width:1px;height:251px;background:#d6d8f0"></div>
<div style="position:absolute;left:840px;top:174px;width:1px;height:251px;background:#d6d8f0"></div>
<div style="position:absolute;left:891px;top:174px;width:1px;height:251px;background:#d6d8f0"></div>
<div style="position:absolute;left:978px;top:174px;width:1px;height:251px;background:#d6d8f0"></div>
<div style="position:absolute;left:737px;top:426px;width:243px;height:6px;border-radius:3px;background:linear-gradient(#7db4e6 0px,#7db4e6 1px,#f0f8fe 1px,#eef7fe 3px,#b8dcf6 3px,#b2d8f5 5px,#7db4e6 5px)"></div>
<div style="position:absolute;left:850px;top:426px;width:16px;height:6px;border-left:1px solid #8cc0ee;border-right:1px solid #8cc0ee;background:linear-gradient(#6eaae6 0px,#6eaae6 1px,#d4eafc 1px,#c8e4fb 3px,#92c9f8 3px,#8cc6f8 5px,#6eaae6 5px)"></div>
<div style="position:absolute;left:738px;top:434px;width:241px;height:28px;background:#f8f8fa"></div>
<div style="position:absolute;left:738px;top:462px;width:241px;height:120px;background:#fdfdfe"></div>
<div style="position:absolute;left:738px;top:459px;width:241px;height:1px;background:#b9bfdc"></div>
<div class="tab" style="left:744px;top:436px;width:74px">취소<span style="font-family:Liberation Mono;font-size:13.5px;letter-spacing:-1.1px"> </span>집계</div>
<div style="position:absolute;left:738px;top:462px;width:241px;height:18px;background:#a5acd2"></div>
<div class="hd" style="left:739px;top:463px;width:102px;height:16px;line-height:15px">취소구분</div>
<div class="hd" style="left:841px;top:463px;width:51px;height:16px;line-height:15px">수량</div>
<div class="hd" style="left:892px;top:463px;width:87px;height:16px;line-height:15px">금액</div>
<div style="position:absolute;left:738px;top:480px;width:241px;height:20px;background:#f9f3f7;border-bottom:1px solid #d9dcf0"></div>
<div class="k" style="left:739px;top:480px;width:101px;height:19px;line-height:19px">가게사정</div>
<div class="n" style="left:841px;top:480px;width:49px;height:19px;line-height:19px">3</div>
<div class="n" style="left:892px;top:480px;width:85px;height:19px;line-height:19px">105,100</div>
<div style="position:absolute;left:738px;top:500px;width:241px;height:19px;background:#edf5fd;border-bottom:1px solid #d9dcf0"></div>
<div class="k" style="left:739px;top:500px;width:101px;height:18px;line-height:18px">반<span style="font-family:Liberation Mono;font-size:13.5px;letter-spacing:-1.1px">    </span>품</div>
<div class="n" style="left:841px;top:500px;width:49px;height:18px;line-height:18px">17</div>
<div class="n" style="left:892px;top:500px;width:85px;height:18px;line-height:18px">385,300</div>
<div style="position:absolute;left:738px;top:519px;width:241px;height:20px;background:#f9f3f7;border-bottom:1px solid #d9dcf0"></div>
<div class="k" style="left:739px;top:519px;width:101px;height:19px;line-height:19px">메뉴취소</div>
<div class="n" style="left:841px;top:519px;width:49px;height:19px;line-height:19px">0</div>
<div class="n" style="left:892px;top:519px;width:85px;height:19px;line-height:19px">0</div>
<div style="position:absolute;left:738px;top:539px;width:241px;height:19px;background:#edf5fd;border-bottom:1px solid #d9dcf0"></div>
<div class="k b" style="left:739px;top:539px;width:101px;height:18px;line-height:18px">합<span style="font-family:Liberation Mono;font-size:13.5px;letter-spacing:-1.1px">    </span>계</div>
<div class="n b" style="left:841px;top:539px;width:49px;height:18px;line-height:18px">20</div>
<div class="n b" style="left:892px;top:539px;width:85px;height:18px;line-height:18px">490,400</div>
<div style="position:absolute;left:738px;top:480px;width:1px;height:78px;background:#d6d8f0"></div>
<div style="position:absolute;left:840px;top:480px;width:1px;height:78px;background:#d6d8f0"></div>
<div style="position:absolute;left:891px;top:480px;width:1px;height:78px;background:#d6d8f0"></div>
<div style="position:absolute;left:978px;top:480px;width:1px;height:78px;background:#d6d8f0"></div>
<div style="position:absolute;left:738px;top:584px;width:241px;height:28px;background:#f8f8fa"></div>
<div style="position:absolute;left:738px;top:612px;width:241px;height:118px;background:#fdfdfe"></div>
<div style="position:absolute;left:738px;top:609px;width:241px;height:1px;background:#b9bfdc"></div>
<div class="tab" style="left:744px;top:586px;width:68px">고객구분</div>
<div style="position:absolute;left:738px;top:612px;width:241px;height:18px;background:#a5acd2"></div>
<div class="hd" style="left:739px;top:613px;width:102px;height:16px;line-height:15px">구분</div>
<div class="hd" style="left:841px;top:613px;width:51px;height:16px;line-height:15px">객수</div>
<div class="hd" style="left:892px;top:613px;width:87px;height:16px;line-height:15px">금액</div>
<div style="position:absolute;left:738px;top:630px;width:241px;height:20px;background:#f9f3f7;border-bottom:1px solid #d9dcf0"></div>
<div class="k" style="left:739px;top:630px;width:101px;height:19px;line-height:19px">신규고객</div>
<div class="n" style="left:841px;top:630px;width:49px;height:19px;line-height:19px">0</div>
<div class="n" style="left:892px;top:630px;width:85px;height:19px;line-height:19px">0</div>
<div style="position:absolute;left:738px;top:650px;width:241px;height:19px;background:#edf5fd;border-bottom:1px solid #d9dcf0"></div>
<div class="k" style="left:739px;top:650px;width:101px;height:18px;line-height:18px">기존고객</div>
<div class="n" style="left:841px;top:650px;width:49px;height:18px;line-height:18px">0</div>
<div class="n" style="left:892px;top:650px;width:85px;height:18px;line-height:18px">0</div>
<div style="position:absolute;left:738px;top:669px;width:241px;height:20px;background:#f9f3f7;border-bottom:1px solid #d9dcf0"></div>
<div class="k b" style="left:739px;top:669px;width:101px;height:19px;line-height:19px">합<span style="font-family:Liberation Mono;font-size:13.5px;letter-spacing:-1.1px">    </span>계</div>
<div class="n b" style="left:841px;top:669px;width:49px;height:19px;line-height:19px">0</div>
<div class="n b" style="left:892px;top:669px;width:85px;height:19px;line-height:19px">0</div>
<div style="position:absolute;left:738px;top:630px;width:1px;height:59px;background:#d6d8f0"></div>
<div style="position:absolute;left:840px;top:630px;width:1px;height:59px;background:#d6d8f0"></div>
<div style="position:absolute;left:891px;top:630px;width:1px;height:59px;background:#d6d8f0"></div>
<div style="position:absolute;left:978px;top:630px;width:1px;height:59px;background:#d6d8f0"></div>
<div style="position:absolute;left:90.6px;top:154px;height:20px;line-height:20px;font-size:18.8px;word-spacing:8px;color:rgba(255,255,255,0.5);font-weight:bold;transform:rotate(-25.4deg);transform-origin:9.4px 10px;pointer-events:none">아프니까 사장이다 포거래소</div>
<div style="position:absolute;left:374.6px;top:392px;height:20px;line-height:20px;font-size:18.8px;word-spacing:8px;color:rgba(255,255,255,0.5);font-weight:bold;transform:rotate(-25.4deg);transform-origin:9.4px 10px;pointer-events:none">아프니까 사장이다 포거래소</div>
<div style="position:absolute;left:96.6px;top:535px;height:20px;line-height:20px;font-size:18.8px;word-spacing:8px;color:rgba(255,255,255,0.5);font-weight:bold;transform:rotate(-25.4deg);transform-origin:9.4px 10px;pointer-events:none">아프니까 사장이다 포거래소</div>
<div style="position:absolute;left:658.6px;top:256px;height:20px;line-height:20px;font-size:18.8px;word-spacing:8px;color:rgba(255,255,255,0.5);font-weight:bold;transform:rotate(-25.4deg);transform-origin:9.4px 10px;pointer-events:none">아프니까 사장이다 포거래소</div>
<div style="position:absolute;left:636.6px;top:652px;height:20px;line-height:20px;font-size:18.8px;word-spacing:8px;color:rgba(255,255,255,0.5);font-weight:bold;transform:rotate(-25.4deg);transform-origin:9.4px 10px;pointer-events:none">아프니까 사장이다 포거래소</div>
</body></html>
